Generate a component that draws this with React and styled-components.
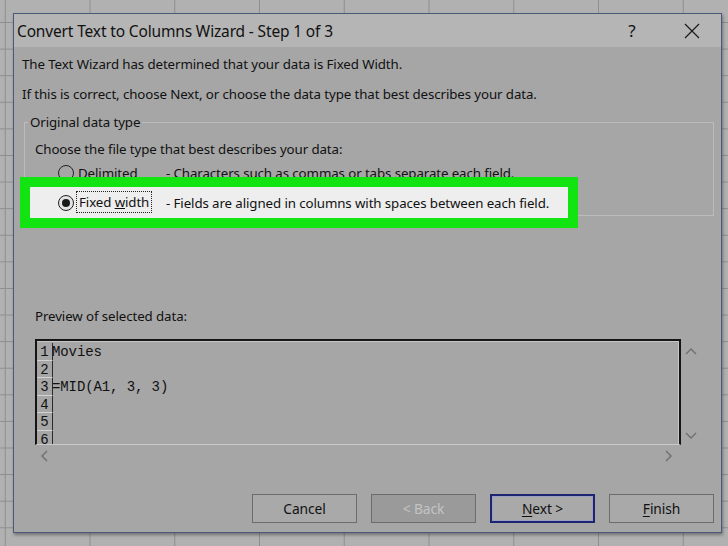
import React from 'react';
import styled, { createGlobalStyle } from 'styled-components';

const GlobalStyle = createGlobalStyle`
  html, body {
    margin: 0;
    padding: 0;
  }

  body {
    width: 728px;
    height: 546px;
    overflow: hidden;
    background-color: #b1b1b1;
    background-image:
      linear-gradient(to right, #8e8e8e 0, #8e8e8e 1px, transparent 1px),
      linear-gradient(to bottom, #8e8e8e 0, #8e8e8e 1px, transparent 1px);
    background-size: 84.75px 26.6px;
    background-position: 4.75px 22px;
    font-family: 'Noto Sans', 'Open Sans', sans-serif;
    color: #111;
  }
`;

const Sheet = styled.div`
  padding: 13px 0 0 13px;
`;

const Dialog = styled.div`
  width: 707px;
  height: 518px;
  border: 1px solid #4c5878;
  background: #a6a6a6;
  box-shadow: 1px 2px 3px rgba(0, 0, 0, 0.35);
  display: flex;
  flex-direction: column;
`;

const TitleBar = styled.div`
  height: 33px;
  background: #b5b5b5;
  display: flex;
  align-items: center;
  padding-left: 3px;
`;

const Title = styled.div`
  font-size: 15.5px;
  letter-spacing: -0.15px;
  flex: 1;
`;

const HelpButton = styled.div`
  width: 46px;
  text-align: center;
  font-size: 17px;
  margin-right: 14px;
`;

const CloseButton = styled.div`
  width: 46px;
  display: flex;
  justify-content: center;
  margin-right: 6px;
`;

const Body = styled.div`
  flex: 1;
  display: flex;
  flex-direction: column;
  padding: 0 7px 9px 8px;
  font-size: 13.3px;
  letter-spacing: -0.1px;
`;

const Line = styled.div`
  line-height: 20px;
  margin-top: ${({ gap }) => gap}px;
  margin-left: ${({ indent = 0 }) => indent}px;
`;

const GroupBox = styled.fieldset`
  margin: 8px 0 0 2px;
  padding: 0 0 0 10px;
  border: 1px solid #bcbcbc;
  min-width: 0;
`;

const Legend = styled.legend`
  padding: 0 2px;
  margin-left: -7px;
  line-height: 20px;
`;

const OptionRow = styled.div`
  display: flex;
  align-items: center;
  height: 20px;
  margin-top: 4px;
  padding-left: 23px;
`;

const HighlightRow = styled.div`
  position: relative;
  display: flex;
  align-items: center;
  width: 510px;
  height: 31px;
  margin: -6px 0 -13px -15px;
  padding-left: 28px;
  border: 10px solid #12e412;
  background: #eeeeee;
`;

const Radio = styled.span`
  width: 14px;
  height: 14px;
  border: 1px solid #222;
  border-radius: 50%;
  background: ${({ checked }) => (checked ? '#e4e4e4' : 'transparent')};
  display: flex;
  align-items: center;
  justify-content: center;
  flex-shrink: 0;

  &::after {
    content: '';
    width: 8px;
    height: 8px;
    border-radius: 50%;
    background: ${({ checked }) => (checked ? '#1a1a1a' : 'transparent')};
  }
`;

const OptionLabel = styled.span`
  width: 88px;
  margin-left: 4px;
  flex-shrink: 0;
`;

const FocusLabel = styled.span`
  border: 1px dotted #222;
  padding: 1px 2px;
  line-height: 19px;
`;

const LabelCell = styled.span`
  width: 90px;
  margin-left: 2px;
  flex-shrink: 0;
`;

const Description = styled.span`
  white-space: nowrap;
  overflow: hidden;
`;

const PreviewArea = styled.div`
  margin: 13px 0 0 13px;
  display: grid;
  grid-template-columns: 646px 20px;
  grid-template-rows: 106px 22px;
`;

const PreviewBox = styled.div`
  padding-top: 2px;
  border-top: 2px solid #151515;
  border-left: 2px solid #151515;
  border-right: 2px solid #151515;
  border-bottom: 1px solid #c9c9c9;
  box-shadow: inset 0 1px 0 #c6c6c6, inset -1px 0 0 #c6c6c6;
  overflow: hidden;
  font-family: 'Liberation Mono', 'Courier New', monospace;
  font-size: 14px;
`;

const PreviewRow = styled.div`
  display: flex;
  height: 17.6px;
  line-height: 18px;
`;

const RowNumber = styled.div`
  width: 15px;
  border-right: 1px solid #2a2a2a;
  border-bottom: 1px solid #d2d2d2;
  text-align: center;
  flex-shrink: 0;
`;

const RowText = styled.div`
  white-space: pre;
  margin-left: -1px;
`;

const VScroll = styled.div`
  display: flex;
  flex-direction: column;
  justify-content: space-between;
  align-items: center;
  padding: 8px 0 5px 0;
`;

const HScroll = styled.div`
  display: flex;
  justify-content: space-between;
  align-items: center;
  padding: 0 8px 0 5px;
`;

const ButtonRow = styled.div`
  display: flex;
  justify-content: flex-end;
  gap: 14px;
  margin-top: auto;
`;

const Button = styled.div`
  width: 105px;
  height: 29px;
  box-sizing: border-box;
  display: flex;
  align-items: center;
  justify-content: center;
  font-size: 13.8px;
  border: ${({ primary }) => (primary ? '2px solid #1d2470' : '1px solid #6c6c6c')};
  background: ${({ disabled }) => (disabled ? '#9a9a9a' : '#a9a9a9')};
  color: ${({ disabled }) => (disabled ? '#c4c4c4' : '#111')};
  box-shadow: ${({ primary }) => (primary ? 'inset 0 0 0 1px #9aa0c4' : 'none')};

  u {
    text-decoration-thickness: 1px;
    text-underline-offset: 2px;
  }
`;

const Chevron = ({ dir }) => {
  const paths = {
    up: 'M1 7 L6 2 L11 7',
    down: 'M1 2 L6 7 L11 2',
    left: 'M7 1 L2 6 L7 11',
    right: 'M2 1 L7 6 L2 11',
  };
  const vertical = dir === 'up' || dir === 'down';
  return (
    <svg
      width={vertical ? 12 : 9}
      height={vertical ? 9 : 12}
      viewBox={vertical ? '0 0 12 9' : '0 0 9 12'}
      fill="none"
      stroke="#6f6f6f"
      strokeWidth="1.4"
    >
      <path d={paths[dir]} />
    </svg>
  );
};

const previewLines = ['Movies', '', '=MID(A1, 3, 3)', '', '', ''];

export default function App() {
  return (
    <>
      <GlobalStyle />
      <Sheet>
        <Dialog>
          <TitleBar>
            <Title>Convert Text to Columns Wizard - Step 1 of 3</Title>
            <HelpButton>?</HelpButton>
            <CloseButton>
              <svg width="16" height="16" viewBox="0 0 16 16" stroke="#1a1a1a" strokeWidth="1.2">
                <path d="M1 1 L15 15 M15 1 L1 15" />
              </svg>
            </CloseButton>
          </TitleBar>
          <Body>
            <Line gap={7}>The Text Wizard has determined that your data is Fixed Width.</Line>
            <Line gap={10}>
              If this is correct, choose Next, or choose the data type that best describes your data.
            </Line>
            <GroupBox>
              <Legend>Original data type</Legend>
              <Line gap={7}>Choose the file type that best describes your data:</Line>
              <OptionRow>
                <Radio />
                <OptionLabel>Delimited</OptionLabel>
                <Description>- Characters such as commas or tabs separate each field.</Description>
              </OptionRow>
              <HighlightRow>
                <Radio checked />
                <LabelCell>
                  <FocusLabel>
                    Fixed <u>w</u>idth
                  </FocusLabel>
                </LabelCell>
                <Description>- Fields are aligned in columns with spaces between each field.</Description>
              </HighlightRow>
            </GroupBox>
            <Line gap={90} indent={13}>
              Preview of selected data:
            </Line>
            <PreviewArea>
              <PreviewBox>
                {previewLines.map((text, i) => (
                  <PreviewRow key={i}>
                    <RowNumber>{i + 1}</RowNumber>
                    <RowText>{text}</RowText>
                  </PreviewRow>
                ))}
              </PreviewBox>
              <VScroll>
                <Chevron dir="up" />
                <Chevron dir="down" />
              </VScroll>
              <HScroll>
                <Chevron dir="left" />
                <Chevron dir="right" />
              </HScroll>
            </PreviewArea>
            <ButtonRow>
              <Button>
                <span>Cancel</span>
              </Button>
              <Button disabled>
                <span>&lt; Back</span>
              </Button>
              <Button primary>
                <span>
                  <u>N</u>ext &gt;
                </span>
              </Button>
              <Button>
                <span>
                  <u>F</u>inish
                </span>
              </Button>
            </ButtonRow>
          </Body>
        </Dialog>
      </Sheet>
    </>
  );
}
